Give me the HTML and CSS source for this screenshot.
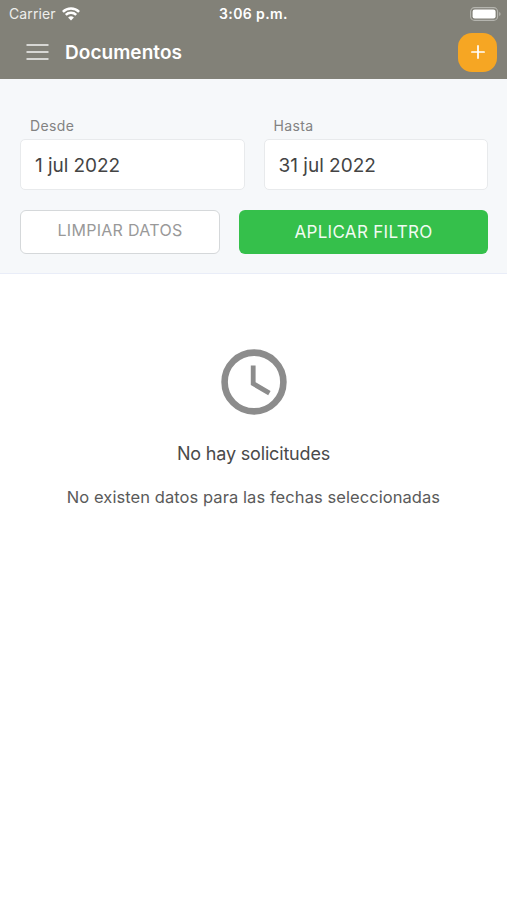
FILE: index.html
```html
<!DOCTYPE html>
<html lang="es">
<head>
    <meta charset="UTF-8">
    <meta name="viewport" content="width=device-width, initial-scale=1.0">
    <title>Documentos</title>
    <link rel="stylesheet" href="styles.css">
</head>
<body>
    <header>
        <div class="status-bar">
            <div class="carrier">
                <span>Carrier</span>
                <svg width="18" height="14" viewBox="0 0 18 14" fill="none" stroke="#fff" stroke-width="2.5">
                    <path d="M.9 4.9a11.6 11.6 0 0 1 16.2 0M3.8 7.9a7.4 7.4 0 0 1 10.4 0"/>
                    <path d="M9 13.6 6.1 10.6a4.2 4.2 0 0 1 5.8 0z" fill="#fff" stroke="none"/>
                </svg>
            </div>
            <span class="time">3:06 p.m.</span>
            <svg class="battery" width="31" height="14" viewBox="0 0 31 14">
                <rect x=".6" y=".6" width="27" height="12.8" rx="4" fill="none" stroke="#b5b5af" stroke-width="1.1"/>
                <rect x="2.6" y="2.5" width="23" height="9" rx="2.2" fill="#fff"/>
                <path d="M29.2 5v4q1.4-.5 1.4-2t-1.4-2z" fill="#b5b5af"/>
            </svg>
        </div>
        <div class="nav-bar">
            <button class="btn-menu" aria-label="Menú">
                <svg width="23" height="18" viewBox="0 0 23 18" stroke="#f4f4f2" stroke-width="1.5">
                    <path d="M.5 2h22M.5 9h22M.5 16h22"/>
                </svg>
            </button>
            <h1>Documentos</h1>
            <button class="btn-agregar" aria-label="Agregar">
                <svg width="14" height="14" viewBox="0 0 14 14" stroke="#fff" stroke-width="1.7" stroke-linecap="round">
                    <path d="M7 .9v12.2M.9 7h12.2"/>
                </svg>
            </button>
        </div>
    </header>

    <section class="filtros">
        <div class="fechas">
            <div class="campo">
                <span class="etiqueta">Desde</span>
                <div class="fecha desde">1 jul 2022</div>
            </div>
            <div class="campo">
                <span class="etiqueta">Hasta</span>
                <div class="fecha">31 jul 2022</div>
            </div>
        </div>
        <div class="botones">
            <button class="btn-limpiar">LIMPIAR DATOS</button>
            <button class="btn-aplicar">APLICAR FILTRO</button>
        </div>
    </section>

    <main class="vacio">
        <svg width="66" height="66" viewBox="0 0 66 66" fill="none" stroke="#8c8c8c">
            <circle cx="33" cy="33" r="29.4" stroke-width="6.6"/>
            <path d="M32.2 16.5v18.2l16.2 9.4" stroke-width="4.8"/>
        </svg>
        <h2>No hay solicitudes</h2>
        <p>No existen datos para las fechas seleccionadas</p>
    </main>
</body>
</html>
```
FILE: styles.css
```css
* {
    box-sizing: border-box;
}

body {
    margin: 0;
    font-family: Inter, "Liberation Sans", sans-serif;
    background-color: #fff;
    color: #4a4a4a;
}

h1, h2, p {
    margin: 0;
    white-space: nowrap;
}

button {
    padding: 0;
    border: none;
    background: none;
    font-family: inherit;
}

svg {
    display: block;
}

header {
    height: 79px;
    background-color: #828178;
    color: #fff;
}

.status-bar {
    display: grid;
    grid-template-columns: 1fr auto 1fr;
    align-items: center;
    height: 27px;
    padding: 0 6px 0 9px;
}

.carrier {
    display: flex;
    align-items: center;
    gap: 6px;
    font-size: 14px;
    letter-spacing: 0.12px;
    color: #eeeeec;
}

.time {
    margin-right: 3px;
    font-size: 14px;
    font-weight: 600;
    letter-spacing: 0.4px;
}

.battery {
    justify-self: end;
}

.nav-bar {
    display: flex;
    align-items: center;
    height: 50px;
    padding: 0 10px 0 26px;
}

h1 {
    margin-left: 16px;
    font-size: 19px;
    font-weight: 600;
    letter-spacing: 0.05px;
}

.btn-agregar {
    display: flex;
    align-items: center;
    justify-content: center;
    width: 39px;
    height: 39px;
    margin-left: auto;
    border-radius: 14px;
    background-color: #f6a623;
}

.filtros {
    height: 195px;
    padding: 37px 19px 0 20px;
    background-color: #f6f8fa;
    border-bottom: 1px solid #e9edf8;
}

.fechas {
    display: flex;
    gap: 19px;
}

.campo {
    flex: 1;
}

.etiqueta {
    display: block;
    height: 23px;
    padding-left: 10px;
    font-size: 14px;
    line-height: 19px;
    letter-spacing: 0.35px;
    color: #828282;
}

.fecha {
    height: 51px;
    padding-left: 14px;
    border: 1px solid #e8eaec;
    border-radius: 5px;
    background-color: #fff;
    font-size: 19px;
    line-height: 51px;
    color: #444;
}

.desde {
    letter-spacing: -0.05px;
}

.botones {
    display: flex;
    gap: 19px;
    margin-top: 20px;
}

.btn-limpiar,
.btn-aplicar {
    height: 44px;
    border-radius: 6px;
}

.btn-limpiar {
    width: 200px;
    padding-bottom: 4px;
    border: 1.5px solid #d5d8da;
    background-color: #fff;
    font-size: 16px;
    letter-spacing: 0.3px;
    color: #999;
}

.btn-aplicar {
    flex: 1;
    background-color: #35c04b;
    font-size: 17px;
    letter-spacing: 0.3px;
    color: #f1fbf2;
}

.vacio {
    display: flex;
    flex-direction: column;
    align-items: center;
    padding-top: 75px;
}

h2 {
    margin-top: 27px;
    font-size: 18px;
    font-weight: 400;
    line-height: 24px;
    letter-spacing: -0.17px;
}

p {
    margin-top: 20px;
    font-size: 16.5px;
    line-height: 22px;
    letter-spacing: 0.07px;
    color: #5a5a5a;
}
```
